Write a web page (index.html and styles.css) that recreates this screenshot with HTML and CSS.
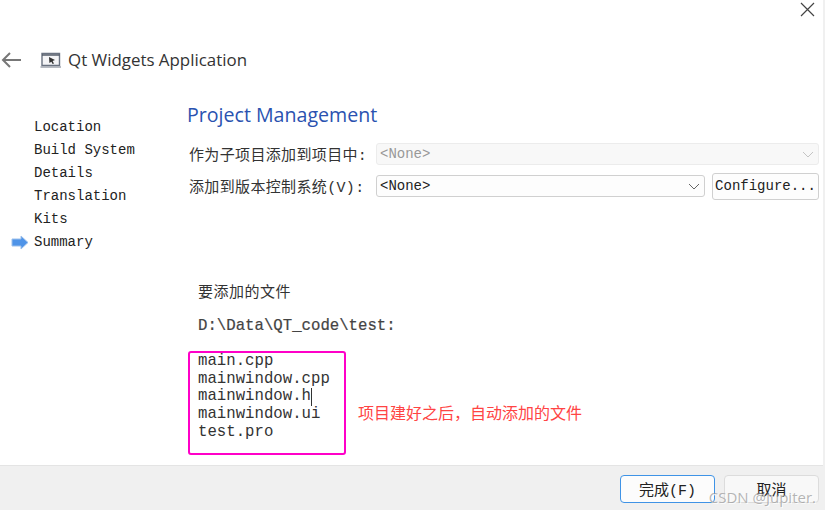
FILE: index.html
```html
<!DOCTYPE html>
<html lang="zh">
<head>
<meta charset="utf-8">
<title>Qt Widgets Application</title>
<link rel="stylesheet" href="styles.css">
</head>
<body>
<div class="window">
  <div class="titlebar">
    <svg class="close" width="16" height="16" viewBox="0 0 16 16"><path d="M2 2L15 15M15 2L2 15" stroke="#444" stroke-width="1.2" fill="none"/></svg>
  </div>
  <div class="header">
    <svg class="back" width="20" height="16" viewBox="0 0 20 16"><path d="M20 8H2M9 1L2 8l7 7" stroke="#777" stroke-width="2" fill="none"/></svg>
    <svg class="appicon" width="22" height="16" viewBox="0 0 22 16"><path d="M2 1.5H19.5V13.5H2Z" fill="#f4f4f6" stroke="#6a7280" stroke-width="1.4"/><path d="M0.5 15H21" stroke="#a4a9b2" stroke-width="1.6"/><path d="M2 3H19.5" stroke="#4a5260" stroke-width="1.4"/><path d="M9 5L15 8L12.6 9L14 11.5L12.6 12L11.4 9.8L9.4 11Z" fill="#333"/></svg>
    <span class="apptitle">Qt Widgets Application</span>
  </div>
  <div class="content">
    <nav class="steps">
      <div class="step">Location</div>
      <div class="step">Build System</div>
      <div class="step">Details</div>
      <div class="step">Translation</div>
      <div class="step">Kits</div>
      <div class="step current">
        <svg class="arrow" width="18" height="15" viewBox="0 0 18 15"><path d="M1 4H10V1L17 7.5L10 14V11H1Z" fill="#4f94e8" stroke="#9cc0ec" stroke-width="1"/></svg>
        Summary
      </div>
    </nav>
    <main class="panel">
      <h1 class="heading">Project Management</h1>
      <div class="form-row">
        <label class="label first">作为子项目添加到项目中:</label>
        <div class="combo disabled wide"><span>&lt;None&gt;</span><svg width="12" height="7" viewBox="0 0 12 7"><path d="M1 1L6 6L11 1" stroke="#c4c4c4" fill="none"/></svg></div>
      </div>
      <div class="form-row second">
        <label class="label">添加到版本控制系统(V):</label>
        <div class="combo"><span>&lt;None&gt;</span><svg width="12" height="7" viewBox="0 0 12 7"><path d="M1 1L6 6L11 1" stroke="#666" fill="none"/></svg></div>
        <button class="configure">Configure...</button>
      </div>
      <p class="files-title">要添加的文件</p>
      <p class="path">D:\Data\QT_code\test:</p>
      <div class="files-row">
        <div class="files">
          <div class="file">main.cpp</div>
          <div class="file">mainwindow.cpp</div>
          <div class="file">mainwindow.h<span class="caret"></span></div>
          <div class="file">mainwindow.ui</div>
          <div class="file">test.pro</div>
        </div>
        <span class="note">项目建好之后，自动添加的文件</span>
      </div>
    </main>
  </div>
  <footer class="footer">
    <button class="btn primary">完成(F)</button>
    <button class="btn">取消</button>
  </footer>
  <div class="watermark">CSDN @Jupiter.</div>
</div>
</body>
</html>
```
FILE: styles.css
```css
* { box-sizing: border-box; }
html, body { margin: 0; padding: 0; }
body { background: #fff; }
.window {
  position: relative;
  width: 825px;
  height: 510px;
  display: flex;
  flex-direction: column;
  overflow: hidden;
  background: #fff;
  border-right: 2px solid #f0f0f0;
  font-family: "Noto Sans CJK SC", sans-serif;
  color: #222;
}
.titlebar { height: 48px; display: flex; justify-content: flex-end; padding: 1px 8px 0 0; flex: none; }
.close { display: block; }
.header { height: 24px; display: flex; align-items: center; flex: none; }
.back { margin-left: 1px; }
.appicon { margin-left: 19px; }
.apptitle { margin-left: 6px; font: 16.9px/24px "Open Sans", sans-serif; color: #333; }
.content { flex: 1; display: flex; min-height: 0; }
.steps {
  width: 187px;
  flex: none;
  padding: 44px 0 0 34px;
  font: 14px/23px "Liberation Mono", monospace;
  color: #222;
}
.step { height: 23px; white-space: nowrap; position: relative; }
.arrow { position: absolute; left: -23px; top: 4px; }
.panel { flex: 1; min-width: 0; display: flex; flex-direction: column; padding-top: 30px; }
.heading {
  margin: 0 0 15px;
  font: 400 19.6px/26px "Open Sans", sans-serif;
  color: #2a52b0;
}
.form-row { display: flex; align-items: center; height: 22px; padding-left: 2px; padding-right: 4px; }
.form-row.second { margin-top: 10px; }
.label {
  width: 187px;
  flex: none;
  font-family: "Liberation Mono", "Noto Sans CJK SC", monospace;
  font-size: 15px;
  letter-spacing: 0.35px;
  white-space: nowrap;
  color: #333;
}
.combo {
  height: 22px;
  flex: 1;
  display: flex;
  align-items: center;
  justify-content: space-between;
  padding: 0 4px 0 3px;
  border: 1px solid #d0d0d0;
  border-radius: 3px;
  background: #fdfdfd;
  font: 14px "Liberation Mono", monospace;
}
.combo.disabled { background: #f8f8f8; border-color: #ececec; color: #999; }
.configure {
  width: 107px;
  height: 27px;
  margin-left: 7px;
  flex: none;
  padding: 0;
  border: 1px solid #d0d0d0;
  border-radius: 3px;
  background: #fdfdfd;
  font: 14px "Liberation Mono", monospace;
  color: #222;
}
.files-title { margin: 84px 0 0 11px; font-size: 15px; line-height: 20px; color: #333; letter-spacing: .5px; }
.path { margin: 16px 0 0 11px; font: 15.7px/18px "Liberation Mono", monospace; color: #444; white-space: nowrap; -webkit-text-stroke: .2px #444; }
.files-row { display: flex; align-items: center; margin: 16px 0 0 1px; }
.files {
  width: 158px;
  height: 104px;
  border: 2px solid #ff00c8;
  border-radius: 3px;
  padding: 0 0 0 8px;
  font: 15.7px/17.7px "Liberation Mono", monospace;
  color: #333;
  flex: none;
}
.file { height: 17.7px; white-space: nowrap; }
.caret { position: absolute; width: 1px; height: 18px; background: #333; }
.note { margin: 18px 0 0 12px; font-size: 16px; color: #f44; white-space: nowrap; }
.footer {
  height: 45px;
  flex: none;
  display: flex;
  justify-content: flex-end;
  align-items: center;
  gap: 9px;
  padding: 0 4px 0 0;
  background: #f0f0f0;
  border-top: 1px solid #e4e4e4;
}
.btn {
  width: 95px;
  height: 28px;
  padding: 0;
  margin-top: 2px;
  border: 1px solid #dcdcdc;
  border-radius: 4px;
  background: #f8f8f8;
  font: 15px "Liberation Mono", "Noto Sans CJK SC", monospace;
  color: #222;
}
.btn.primary { border: 1.5px solid #3f93e6; background: #fcfcfc; }
.watermark {
  position: absolute;
  right: 7px;
  bottom: 3px;
  font: 15px "Open Sans", sans-serif;
  color: rgba(150,150,150,.7);
  text-shadow: 1px 1px 0 rgba(255,255,255,.8);
  white-space: nowrap;
}
```
